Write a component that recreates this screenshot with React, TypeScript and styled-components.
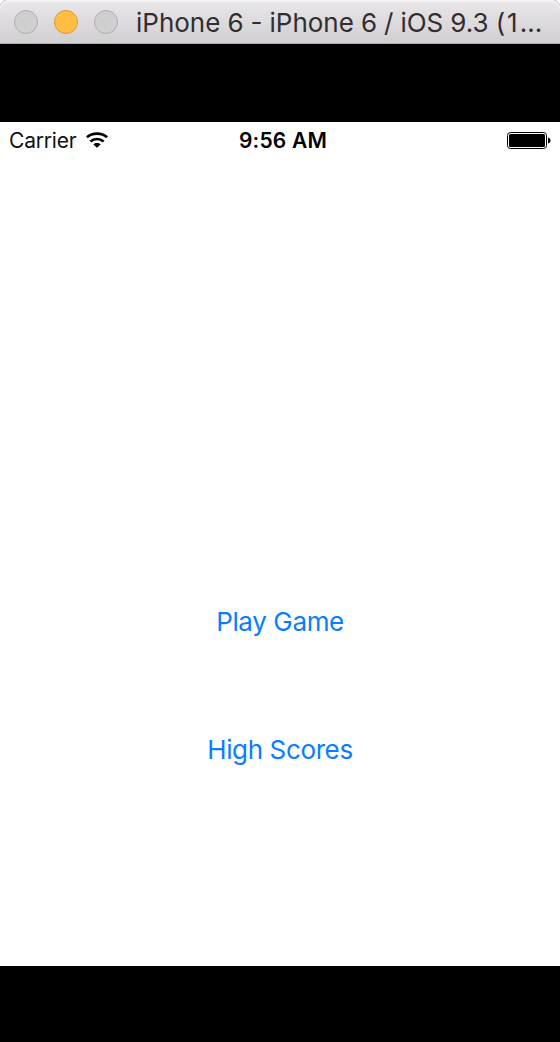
import React from "react";
import styled, { createGlobalStyle } from "styled-components";

const GlobalStyle = createGlobalStyle`
  body { margin: 0; background: #000; }
  * { box-sizing: border-box; }
`;

const Simulator = styled.div`
  width: 560px;
  height: 1042px;
  display: flex;
  flex-direction: column;
  background: #000;
  font-family: Inter, "Liberation Sans", sans-serif;
  overflow: hidden;
`;

const TitleCorners = styled.div`
  background: #fff;
  height: 44px;
  flex: none;
  overflow: hidden;
`;

const TitleBar = styled.header`
  height: 44px;
  display: flex;
  align-items: center;
  padding-left: 14px;
  border-radius: 9px 9px 0 0;
  border-bottom: 1px solid #b3b1b3;
  background: linear-gradient(#e9e7e9, #d1cfd1);
  box-shadow: inset 0 2px 0 #f4f2f4, 0 0 0 1px #c9c9c9;
`;

const Lights = styled.div`
  display: flex;
  gap: 16px;
  margin-right: 18px;
`;

const Light = styled.span<{ $fill: string; $edge: string }>`
  width: 24px;
  height: 24px;
  border-radius: 50%;
  background: ${(p) => p.$fill};
  border: 1px solid ${(p) => p.$edge};
`;

const Title = styled.h1`
  margin: 0;
  padding-top: 2px;
  font-size: 26px;
  line-height: 32px;
  font-weight: 400;
  letter-spacing: 0;
  word-spacing: -0.3px;
  color: #302e30;
  white-space: nowrap;
`;

const BuildNumber = styled.span`
  letter-spacing: 1.8px;
`;

const Ellipsis = styled.span`
  margin-left: 0.5px;
`;

const Screen = styled.main`
  height: 844px;
  margin-top: 78px;
  background: #fff;
  display: flex;
  flex-direction: column;
`;

const StatusBar = styled.div`
  height: 37px;
  flex: none;
  padding: 0 9px;
  display: grid;
  grid-template-columns: 1fr auto 1fr;
  align-items: center;
  font-size: 21px;
  line-height: 26px;
  color: #111;
`;

const Carrier = styled.div`
  display: flex;
  align-items: center;
  gap: 10px;
`;

const CarrierName = styled.span`
  letter-spacing: -0.2px;
`;

const Clock = styled.span`
  font-weight: 600;
  letter-spacing: 0.2px;
  color: #000;
  padding-left: 6px;
`;

const BatterySlot = styled.div`
  display: flex;
  justify-content: flex-end;
`;

const Menu = styled.nav`
  display: flex;
  flex-direction: column;
  align-items: center;
  gap: 96px;
  padding-top: 447px;
`;

const MenuButton = styled.button`
  border: 0;
  padding: 0;
  background: none;
  font: 400 26px/32px Inter, "Liberation Sans", sans-serif;
  letter-spacing: -0.37px;
  color: #087dff;
`;

const WifiIcon = () => (
  <svg width="22" height="17" viewBox="0 0 22 17" fill="none" stroke="#000" strokeWidth="2.7">
    <path d="M.9 5.3C6.6 .5 15.4 .5 21.1 5.3" />
    <path d="M4.4 9.6C8.2 6.1 13.8 6.1 17.6 9.6" />
    <path d="M11 15.8L7.4 12.4C9.4 10.6 12.6 10.6 14.6 12.4Z" fill="#000" stroke="none" />
  </svg>
);

const BatteryIcon = () => (
  <svg width="44" height="18" viewBox="0 0 44 18">
    <rect x=".5" y=".5" width="39" height="16" rx="3" fill="#fff" stroke="#000" />
    <rect x="2" y="2" width="36" height="13" rx="1.5" />
    <path d="M41 5.5C44.4 6 44.4 11 41 11.5Z" />
  </svg>
);

export default function App() {
  return (
    <>
      <GlobalStyle />
      <Simulator>
        <TitleCorners>
          <TitleBar>
            <Lights>
              <Light $fill="#cfcfcf" $edge="#b0afb0" />
              <Light $fill="#ffbe41" $edge="#dd9a34" />
              <Light $fill="#cfcfcf" $edge="#b0afb0" />
            </Lights>
            <Title>
              iPhone 6 - iPhone 6 / iOS 9.3 <BuildNumber>(1</BuildNumber>
              <Ellipsis>…</Ellipsis>
            </Title>
          </TitleBar>
        </TitleCorners>
        <Screen>
          <StatusBar>
            <Carrier>
              <CarrierName>Carrier</CarrierName>
              <WifiIcon />
            </Carrier>
            <Clock>9:56 AM</Clock>
            <BatterySlot>
              <BatteryIcon />
            </BatterySlot>
          </StatusBar>
          <Menu>
            <MenuButton>Play Game</MenuButton>
            <MenuButton>High Scores</MenuButton>
          </Menu>
        </Screen>
      </Simulator>
    </>
  );
}
